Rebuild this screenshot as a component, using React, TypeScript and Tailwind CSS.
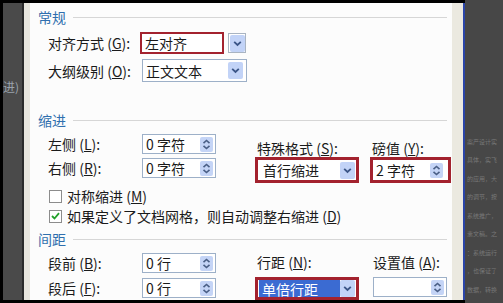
import React from "react";

const FONT = { fontFamily: '"Noto Sans CJK SC", "Noto Sans", sans-serif' };

function Key({ k }: { k: string }) {
  return (
    <span>
      {" ("}
      <span className="underline">{k}</span>
      {"):"}
    </span>
  );
}

function Header({ title }: { title: string }) {
  return (
    <div className="flex h-[18px] items-center pl-[8px] pr-[5px]">
      <span className="text-[14px] leading-none text-[#2f6fae]">{title}</span>
      <div className="ml-[7px] h-[1px] flex-1 bg-[#d6d6d6]" />
    </div>
  );
}

function Spin() {
  return (
    <div className="flex h-[15px] w-[13px] items-center justify-center rounded-[2px] bg-[#c4d4f6]">
      <svg width="9" height="11" viewBox="0 0 9 11">
        <path d="M1.5 4.2 L4.5 1.5 L7.5 4.2" fill="none" stroke="#4a5f86" strokeWidth="1.6" />
        <path d="M1.5 6.8 L4.5 9.5 L7.5 6.8" fill="none" stroke="#4a5f86" strokeWidth="1.6" />
      </svg>
    </div>
  );
}

function Arrow() {
  return (
    <div className="flex h-[17px] w-[15px] items-center justify-center rounded-[2px] bg-[#c2d3f7]">
      <svg width="9" height="7" viewBox="0 0 9 7">
        <path d="M1.2 1.8 L4.5 5 L7.8 1.8" fill="none" stroke="#3b5587" strokeWidth="1.8" />
      </svg>
    </div>
  );
}

function SpinInput({ value }: { value: string }) {
  return (
    <div className="flex h-[20px] w-[74px] items-center justify-between border border-[#9db0c8] bg-white pl-[3px] pr-[2px]">
      <span className="text-[14px] leading-none text-[#1a1a1a] whitespace-pre">{value}</span>
      <Spin />
    </div>
  );
}

function Row({ label, k, children }: { label: string; k: string; children: React.ReactNode }) {
  return (
    <div className="flex h-[20px] items-center">
      <div className="w-[112px] pl-[18px] text-[14px] leading-none text-[#1a1a1a] whitespace-nowrap">
        {label}
        <Key k={k} />
      </div>
      {children}
    </div>
  );
}

function Check({ checked, label, k }: { checked?: boolean; label: string; k: string }) {
  return (
    <div className="flex h-[20px] items-center pl-[19px]">
      <div className="flex h-[13px] w-[13px] items-center justify-center border border-[#8c8c8c] bg-white">
        {checked && (
          <svg width="9" height="8" viewBox="0 0 9 8">
            <path d="M1 4 L3.5 6.5 L8 1.2" fill="none" stroke="#22a02a" strokeWidth="1.8" />
          </svg>
        )}
      </div>
      <span className="ml-[5px] text-[14px] leading-none text-[#1a1a1a] whitespace-nowrap">
        {label}
        {" ("}
        <span className="underline">{k}</span>
        {")"}
      </span>
    </div>
  );
}

const ghost = ["案产设计实", "具体，实飞", "的应用，大", "的调节，按", "系统推广，", "素文稿。之", "：系统运行", "，也保证了", "数据，转换"];

export default function App() {
  return (
    <div className="flex h-[303px] w-[503px] overflow-hidden bg-[#474747]" style={FONT}>
      <div className="flex h-[303px] w-[465px] border-y-[3px] border-l-[3px] border-black">
        <div className="flex w-[19px] flex-col bg-[#4a4a4a] pt-[78px]">
          <span className="text-[12px] leading-none text-[#9aa3ad] whitespace-nowrap">进)</span>
        </div>
        <div className="w-[2px] bg-[#2a2a2a]" />
        <div className="w-[6px] bg-[#e7e5dd]" />
        <div className="flex w-[422px] flex-col bg-[#fcfcfc]">
          <div className="pt-[5px]">
            <Header title="常规" />
          </div>
          <div className="mt-[6px] flex h-[22px] items-center">
            <div className="w-[110px] pl-[18px] text-[14px] leading-none text-[#1a1a1a] whitespace-nowrap">
              对齐方式<Key k="G" />
            </div>
            <div className="flex h-[22px] w-[84px] items-center border-2 border-[#a3222e] bg-white pl-[3px]">
              <span className="text-[14px] leading-none text-[#1a1a1a]">左对齐</span>
            </div>
            <div className="ml-[4px] flex h-[20px] w-[18px] items-center justify-center border border-[#a9b4c2] bg-white">
              <Arrow />
            </div>
          </div>
          <div className="mt-[5px] flex h-[23px] items-center">
            <div className="w-[112px] pl-[18px] text-[14px] leading-none text-[#1a1a1a] whitespace-nowrap">
              大纲级别<Key k="O" />
            </div>
            <div className="flex h-[23px] w-[105px] items-center justify-between border border-[#9db0c8] bg-white pl-[3px] pr-[3px]">
              <span className="text-[14px] leading-none text-[#1a1a1a]">正文文本</span>
              <Arrow />
            </div>
          </div>

          <div className="mt-[29px]">
            <Header title="缩进" />
          </div>
          <div className="mt-[5px] flex">
            <div className="flex flex-col gap-[4px]">
              <Row label="左侧" k="L">
                <SpinInput value="0 字符" />
              </Row>
              <Row label="右侧" k="R">
                <SpinInput value="0 字符" />
              </Row>
            </div>
            <div className="ml-[39px] flex flex-col pt-[4px]">
              <div className="flex h-[19px] items-center text-[14px] leading-none text-[#1a1a1a] whitespace-nowrap">
                <span className="w-[117px] pl-[2px]">
                  特殊格式 (<span className="underline">S</span>):
                </span>
                <span>
                  磅值 (<span className="underline">Y</span>):
                </span>
              </div>
              <div className="flex h-[26px] items-center gap-[11px]">
                <div className="flex h-[26px] w-[104px] items-center justify-between border-[3px] border-[#a3222e] bg-white pl-[5px] pr-[1px]">
                  <span className="text-[14px] leading-none text-[#1a1a1a]">首行缩进</span>
                  <Arrow />
                </div>
                <div className="flex h-[26px] w-[81px] items-center justify-between border-[3px] border-[#a3222e] bg-white pl-[3px] pr-[5px]">
                  <span className="text-[14px] leading-none text-[#1a1a1a] whitespace-pre">2 字符</span>
                  <Spin />
                </div>
              </div>
            </div>
          </div>

          <div className="mt-[3px]">
            <Check label="对称缩进" k="M" />
            <Check checked label="如果定义了文档网格，则自动调整右缩进" k="D" />
          </div>

          <div className="mt-[4px]">
            <Header title="间距" />
          </div>
          <div className="mt-[5px] flex">
            <div className="flex flex-col gap-[5px]">
              <Row label="段前" k="B">
                <SpinInput value="0 行" />
              </Row>
              <Row label="段后" k="F">
                <SpinInput value="0 行" />
              </Row>
            </div>
            <div className="ml-[39px] flex flex-col">
              <div className="flex h-[18px] items-center text-[14px] leading-none text-[#1a1a1a] whitespace-nowrap">
                <span className="w-[118px] pl-[2px]">
                  行距 (<span className="underline">N</span>):
                </span>
                <span>
                  设置值 (<span className="underline">A</span>):
                </span>
              </div>
              <div className="mt-[6px] flex h-[23px] items-start gap-[14px]">
                <div className="flex h-[23px] w-[104px] items-center justify-between border-[3px] border-[#a3222e] bg-white pl-[1px] pr-[1px]">
                  <span className="flex h-[17px] w-[82px] items-center bg-[#3b6bd2] pl-[3px] text-[14px] leading-none text-white">单倍行距</span>
                  <Arrow />
                </div>
                <div className="flex h-[20px] w-[74px] items-center justify-end border border-[#9db0c8] bg-white pr-[2px]">
                  <Spin />
                </div>
              </div>
            </div>
          </div>
        </div>
        <div className="w-[11px] bg-[#ebe9e0]" />
        <div className="w-[2px] bg-[#2b45a8]" />
      </div>
      <div className="flex w-[38px] flex-col pl-[2px] pt-[137px]">
        {ghost.map((g, i) => (
          <span key={i} className="h-[20.5px] text-[6px] leading-[10px] text-[#777] whitespace-nowrap">
            {g}
          </span>
        ))}
      </div>
    </div>
  );
}
